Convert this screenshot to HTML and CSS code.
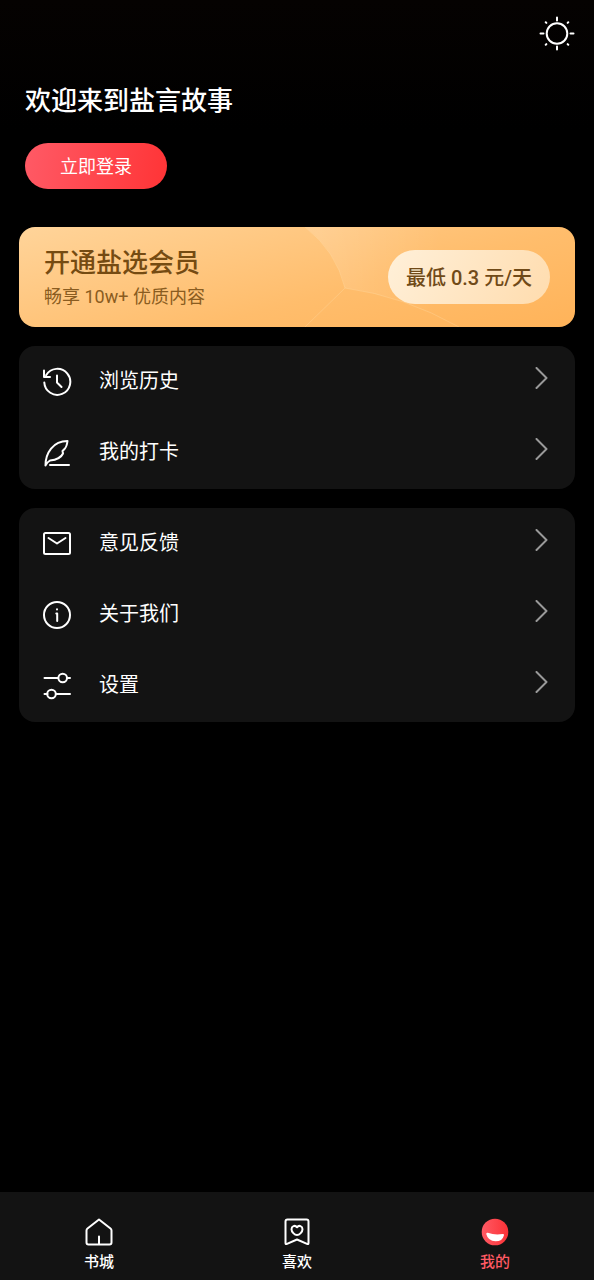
FILE: index.html
```html
<!DOCTYPE html>
<html lang="zh-CN">
<head>
<meta charset="utf-8">
<meta name="viewport" content="width=device-width, initial-scale=1">
<title>我的</title>
<link rel="stylesheet" href="styles.css">
</head>
<body>
<div class="page">
  <header class="topbar">
    <button class="theme" type="button" aria-label="切换主题">
      <svg class="sun" viewBox="0 0 36 36" aria-hidden="true">
        <circle cx="18" cy="17.500" r="10.300"/>
        <path d="M18 1.500v3M18 30.500v3M1.500 17.500h3M31.500 17.500h3M6.700 6.200l.7.7M28.600 28.100l.7.7M6.700 28.800l.7-.7M28.600 6.900l.7-.7"/>
      </svg>
    </button>
  </header>

  <main class="content">
    <section class="welcome">
      <h1 class="title">欢迎来到盐言故事</h1>
      <button class="login" type="button">立即登录</button>
    </section>

    <section class="banner">
      <svg class="facets" viewBox="0 0 556 100" preserveAspectRatio="none" aria-hidden="true">
        <defs>
          <linearGradient id="facet-top" gradientUnits="userSpaceOnUse" x1="300" y1="20" x2="420" y2="30">
            <stop offset="0" stop-color="#fff" stop-opacity=".14"/>
            <stop offset="1" stop-color="#fff" stop-opacity="0"/>
          </linearGradient>
        </defs>
        <path fill="url(#facet-top)" d="M286 0Q317 24 326 61Q385 69 440 100H556V0Z"/>
        <path fill="none" stroke="#ffe0ae" stroke-opacity=".3" d="M286 0Q317 24 326 61L286 100M326 61Q385 69 440 100"/>
      </svg>
      <div class="offer">
        <h2 class="offer-title">开通盐选会员</h2>
        <p class="offer-note">畅享 10w+ 优质内容</p>
      </div>
      <button class="price" type="button">最低 0.3 元/天</button>
    </section>

    <nav class="menu" aria-label="我的记录">
      <a class="row" href="#history">
        <svg class="icon" viewBox="0 0 30 30" aria-hidden="true"><path d="M2.300 15.500A13 13 0 1 0 4.100 8.200M2 3.500V10H8M15 8.500V15.500L19.500 20"/></svg>
        <span class="label">浏览历史</span>
        <svg class="chevron" viewBox="0 0 12 22" aria-hidden="true"><path d="M1 1l10 10L1 21"/></svg>
      </a>
      <a class="row" href="#checkin">
        <svg class="icon" viewBox="0 0 30 30" aria-hidden="true"><path d="M3.500 27.500C3.500 15 11 3 25.500 3C25 7 24.500 9 22.500 11L20.500 13L21 15.500C18.500 21 13 22 8 22.500C5.500 24 4 25.500 3.500 27.500M8 27H27"/></svg>
        <span class="label">我的打卡</span>
        <svg class="chevron" viewBox="0 0 12 22" aria-hidden="true"><path d="M1 1l10 10L1 21"/></svg>
      </a>
    </nav>

    <nav class="menu" aria-label="更多">
      <a class="row" href="#feedback">
        <svg class="icon" viewBox="0 0 30 30" aria-hidden="true"><rect x="2" y="4" width="26" height="21" rx="1.500"/><path d="M6.500 9L15 14.500L23.500 9"/></svg>
        <span class="label">意见反馈</span>
        <svg class="chevron" viewBox="0 0 12 22" aria-hidden="true"><path d="M1 1l10 10L1 21"/></svg>
      </a>
      <a class="row" href="#about">
        <svg class="icon" viewBox="0 0 30 30" aria-hidden="true"><circle cx="15" cy="15" r="13"/><path d="M14.300 13.500h.9V21M15 9.200v.4"/></svg>
        <span class="label">关于我们</span>
        <svg class="chevron" viewBox="0 0 12 22" aria-hidden="true"><path d="M1 1l10 10L1 21"/></svg>
      </a>
      <a class="row" href="#settings">
        <svg class="icon" viewBox="0 0 30 30" aria-hidden="true"><path d="M2.500 7H16M25 7h3M2.500 23H5.500M14 23H28"/><circle cx="20.700" cy="7" r="4.300"/><circle cx="9.500" cy="23" r="4.300"/></svg>
        <span class="label">设置</span>
        <svg class="chevron" viewBox="0 0 12 22" aria-hidden="true"><path d="M1 1l10 10L1 21"/></svg>
      </a>
    </nav>
  </main>

  <nav class="tabs" aria-label="主导航">
    <a class="tab" href="#store">
      <svg class="icon" viewBox="0 0 30 30" aria-hidden="true"><path d="M15 2.500L26.500 11.500Q27.500 12.300 27.500 13.500V25.500Q27.500 27.500 25.500 27.500H4.500Q2.500 27.500 2.500 25.500V13.500Q2.500 12.300 3.500 11.500ZM15 19.500V27"/></svg>
      <span>书城</span>
    </a>
    <a class="tab" href="#likes">
      <svg class="icon" viewBox="0 0 30 30" aria-hidden="true"><path d="M5.500 2.500H24.500Q26.500 2.500 26.500 4.500V26Q26.500 27.600 25 26.900L15 22.500L5 26.900Q3.500 27.600 3.500 26V4.500Q3.500 2.500 5.500 2.500ZM15 10.300C13 7.600 9.500 9.200 9.500 12.200C9.500 14.800 12.500 18 15 18C17.500 18 20.500 14.800 20.500 12.200C20.500 9.200 17 7.600 15 10.300Z"/></svg>
      <span>喜欢</span>
    </a>
    <a class="tab tab-active" href="#me" aria-current="page">
      <svg class="face" viewBox="0 0 30 30" aria-hidden="true">
        <defs>
          <linearGradient id="face-fill" x1="0" y1="0" x2="1" y2="0">
            <stop offset="0" stop-color="#ff5a64"/>
            <stop offset="1" stop-color="#fb3237"/>
          </linearGradient>
        </defs>
        <circle cx="15" cy="15" r="13.300" fill="url(#face-fill)"/>
        <path fill="#fff" d="M7.800 15.800Q15 18.400 22.600 17Q24.300 16.700 23.900 18.400Q22.400 24.300 15.600 24.300Q8 24 6.300 17.300Q6 15.200 7.800 15.800Z"/>
      </svg>
      <span>我的</span>
    </a>
  </nav>
</div>
</body>
</html>
```

FILE: styles.css
```css
* {
  box-sizing: border-box;
}

body {
  margin: 0;
  background: #000;
  color: #fff;
  font-family: Roboto, "Noto Sans CJK SC", sans-serif;
}

button {
  border: 0;
  font-family: inherit;
  color: inherit;
  cursor: pointer;
}

a {
  color: inherit;
  text-decoration: none;
}

h1,
h2,
p {
  margin: 0;
}

svg {
  display: block;
  flex: none;
}

.page {
  display: flex;
  flex-direction: column;
  min-height: 100vh;
  background: linear-gradient(#050201, #000 130px);
}

.topbar {
  display: flex;
  justify-content: flex-end;
  padding: 16px 19px 0;
}

.theme {
  padding: 0;
  background: none;
}

.sun {
  width: 36px;
  height: 36px;
}

.sun,
.icon,
.chevron {
  fill: none;
  stroke: #fff;
  stroke-width: 2;
  stroke-linecap: round;
  stroke-linejoin: round;
}

.content {
  flex: 1;
  display: flex;
  flex-direction: column;
  gap: 19px;
  padding: 29px 19px 19px;
}

.welcome {
  display: flex;
  flex-direction: column;
  align-items: flex-start;
  gap: 22px;
  padding: 0 6px 19px;
}

.title,
.offer-title {
  font-size: 26px;
  font-weight: 500;
  line-height: 40px;
}

.login {
  padding: 1px 35px 0;
  border-radius: 23px;
  background: linear-gradient(100deg, #ff5a66, #ff3436);
  font-size: 18px;
  line-height: 45px;
}

.banner {
  position: relative;
  display: flex;
  align-items: center;
  justify-content: space-between;
  padding: 16px 25px;
  border-radius: 16px;
  overflow: hidden;
  background: linear-gradient(165deg, #ffd49a, #ffbd6c 60%, #ffb359);
  color: #754b12;
}

.facets {
  position: absolute;
  inset: 0;
  width: 100%;
  height: 100%;
}

.offer,
.price {
  position: relative;
}

.offer-note {
  color: #8a5c20;
  font-size: 18px;
  line-height: 28px;
}

.price {
  padding: 2px 18px 0;
  border-radius: 27px;
  background: linear-gradient(120deg, #fff0d9, #ffdcae);
  color: #704a18;
  font-size: 20px;
  font-weight: 500;
  line-height: 52px;
}

.menu {
  padding-bottom: 1px;
  border-radius: 16px;
  background: #131313;
}

.row {
  display: flex;
  align-items: center;
  gap: 27px;
  min-height: 71px;
  padding: 0 27px 0 23px;
}

.icon {
  width: 30px;
  height: 30px;
}

.label {
  flex: 1;
  padding-bottom: 1px;
  font-size: 20px;
  line-height: 30px;
}

.chevron {
  width: 13px;
  height: 30px;
  padding-bottom: 8px;
  stroke: #999;
}

.tabs {
  display: grid;
  grid-template-columns: repeat(3, 1fr);
  min-height: 88px;
  background: #131313;
}

.tab {
  display: flex;
  flex-direction: column;
  align-items: center;
  gap: 4px;
  padding-top: 25px;
  font-size: 15px;
  font-weight: 500;
  line-height: 22px;
}

.tab-active {
  color: #ff5a64;
}

.face {
  width: 30px;
  height: 30px;
}
```
